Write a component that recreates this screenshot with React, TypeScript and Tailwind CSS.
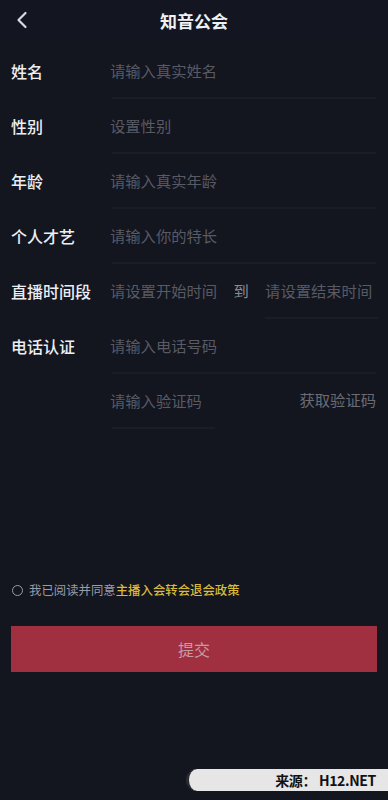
import React from "react";

const font = { fontFamily: '"Noto Sans CJK SC", "Noto Sans", sans-serif' };

function Row({ label, children }: { label?: string; children: React.ReactNode }) {
  return (
    <div className="flex h-[55px] items-stretch">
      <div className="flex w-[110px] shrink-0 items-center pl-[11px] pb-[2px] text-[16px] font-medium text-[#eceef2]">
        {label}
      </div>
      {children}
    </div>
  );
}

function Field({ text }: { text: string }) {
  return (
    <div className="ml-[2px] mr-[12px] flex flex-1 items-center border-b-2 border-[#1a1c27] text-[15.3px] text-[#585a64]">
      <span className="-ml-[2px] whitespace-nowrap">{text}</span>
    </div>
  );
}

export default function App() {
  return (
    <div className="relative min-h-[800px] w-full bg-[#13151f]" style={font}>
      {/* header */}
      <div className="relative flex h-[42px] items-center justify-center bg-[#131520]">
        <svg className="absolute left-[15px] top-[11px]" width="14" height="18" viewBox="0 0 14 18" fill="none">
          <path d="M10.5 2 L3.5 9 L10.5 16" stroke="#d8dae0" strokeWidth="2.2" strokeLinecap="round" strokeLinejoin="round" />
        </svg>
        <div className="text-[17px] font-bold text-[#f0f1f4]">知音公会</div>
      </div>

      <div className="pt-[2px]">
        <Row label="姓名">
          <Field text="请输入真实姓名" />
        </Row>
        <Row label="性别">
          <Field text="设置性别" />
        </Row>
        <Row label="年龄">
          <Field text="请输入真实年龄" />
        </Row>
        <Row label="个人才艺">
          <Field text="请输入你的特长" />
        </Row>
        <Row label="直播时间段">
          <div className="flex flex-1 items-stretch pr-[10px] text-[15.3px] text-[#585a64] whitespace-nowrap">
            <div className="flex items-center border-b-2 border-transparent">请设置开始时间</div>
            <div className="flex w-[48px] shrink-0 items-center justify-center border-b-2 border-transparent text-[#8a8c95]">到</div>
            <div className="flex flex-1 items-center border-b-2 border-[#1a1c27]">请设置结束时间</div>
          </div>
        </Row>
        <Row label="电话认证">
          <Field text="请输入电话号码" />
        </Row>
        <Row>
          <div className="flex flex-1 items-stretch pr-[12px]">
            <div className="ml-[2px] flex w-[103px] items-center border-b-2 border-[#1a1c27] text-[15.3px] text-[#585a64] whitespace-nowrap">
              <span className="-ml-[2px]">请输入验证码</span>
            </div>
            <div className="flex flex-1 items-center justify-end pb-[4px] text-[15.3px] text-[#6a6c75] whitespace-nowrap">获取验证码</div>
          </div>
        </Row>
      </div>

      {/* agreement */}
      <div className="mt-[152px] flex items-center pl-[12px] text-[12.4px]">
        <div className="mr-[6px] h-[11px] w-[11px] rounded-full border-[1.5px] border-[#9c9ea6]" />
        <span className="text-[#9a9ca4]">我已阅读并同意</span>
        <span className="font-medium text-[#d9bb3c]">主播入会转会退会政策</span>
      </div>

      {/* button */}
      <div className="mx-[11px] mt-[26px] flex h-[46px] items-center justify-center bg-[#a02f40] text-[16px] text-[#c89ba3]">
        提交
      </div>

      {/* watermark */}
      <div className="absolute left-[186px] top-[769px] flex h-[22px] w-[202px] items-center justify-end rounded-l-full border-l-[3px] border-[#2a2b33] bg-[#e6e6e6] pr-[12px]">
        <span className="text-[14px] font-bold tracking-tight text-[#111]" style={{ fontFamily: '"Noto Sans CJK SC", "Liberation Sans", sans-serif' }}>
          来源：&nbsp;H12.NET
        </span>
      </div>
    </div>
  );
}
